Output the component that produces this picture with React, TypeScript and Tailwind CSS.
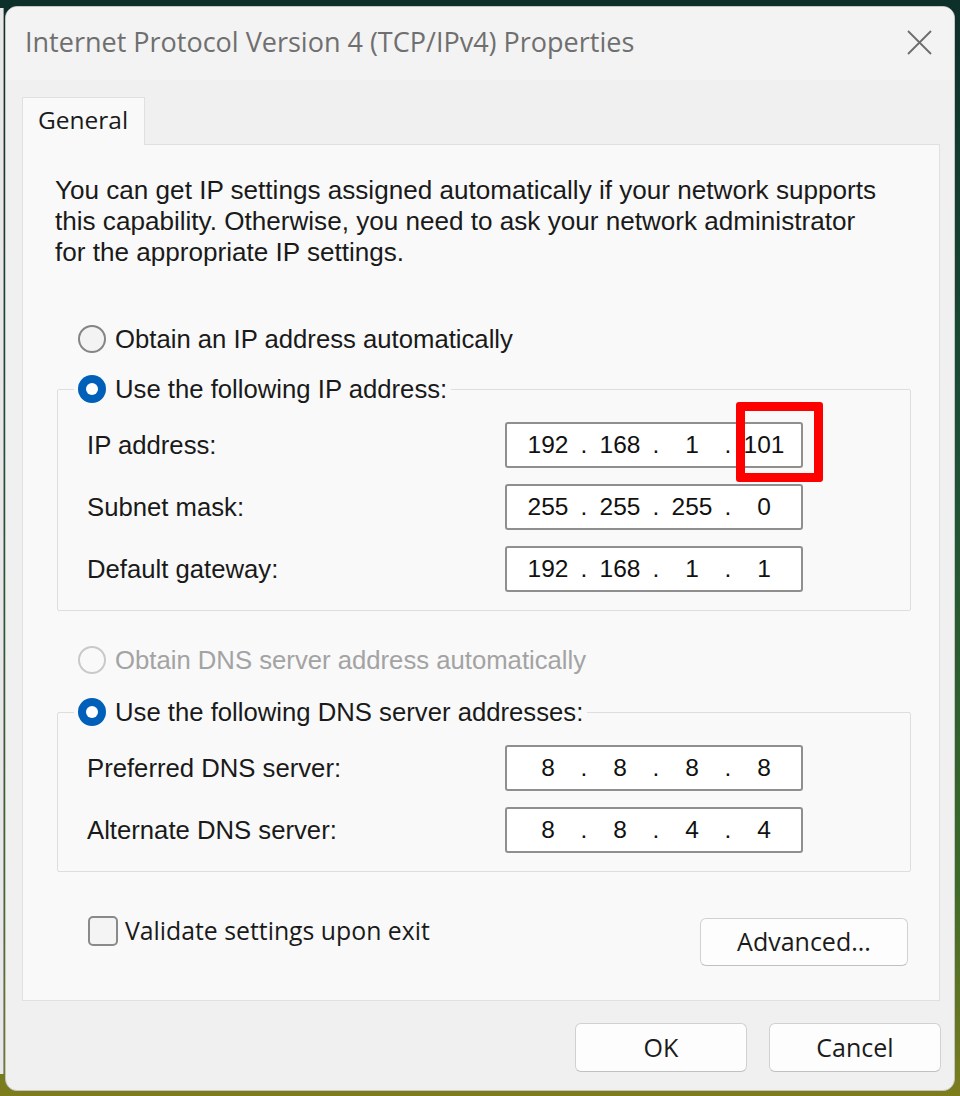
import React from 'react';

type RadioState = 'off' | 'on' | 'disabled';

const Radio: React.FC<{ state: RadioState }> = ({ state }) => {
  if (state === 'on') {
    return (
      <span className="flex h-[28px] w-[28px] shrink-0 items-center justify-center rounded-full bg-[#005fb8]">
        <span className="h-[12px] w-[12px] rounded-full bg-white" />
      </span>
    );
  }
  if (state === 'disabled') {
    return <span className="h-[28px] w-[28px] shrink-0 rounded-full border-2 border-[#c9c9c9]" />;
  }
  return <span className="h-[28px] w-[28px] shrink-0 rounded-full border-2 border-[#858585] bg-[#f3f3f3]" />;
};

const RadioRow: React.FC<{ state: RadioState; label: string }> = ({ state, label }) => (
  <div className="flex h-[30px] items-center gap-[9px]">
    <Radio state={state} />
    <span
      className={`whitespace-nowrap font-['Liberation_Sans',Arial,sans-serif] text-[25.7px] leading-[30px] ${
        state === 'disabled' ? 'text-[#a3a3a3]' : 'text-[#1a1a1a]'
      }`}
    >
      {label}
    </span>
  </div>
);

const IpField: React.FC<{ octets: string[]; highlight?: boolean }> = ({ octets, highlight }) => (
  <div className="relative flex h-[46px] w-[298px] items-center rounded-[3px] border-2 border-[#8f8f8f] bg-white pl-[12px] font-['Liberation_Sans',Arial,sans-serif] text-[24.5px] text-[#111111]">
    {octets.map((o, i) => (
      <React.Fragment key={i}>
        {i > 0 && <span className="w-[14px] text-center">.</span>}
        <span className="w-[58px] text-center">{o}</span>
      </React.Fragment>
    ))}
    {highlight && (
      <span className="pointer-events-none absolute left-[229px] top-[-22px] h-[80px] w-[87px] rounded-[3px] border-[9px] border-[#ff0000]" />
    )}
  </div>
);

interface Row {
  label: string;
  octets: string[];
  highlight?: boolean;
}

const Group: React.FC<{ legend: string; rows: Row[] }> = ({ legend, rows }) => (
  <fieldset className="ml-[2px] rounded-[2px] border border-[#dedede] pb-[18px] pl-[16px]">
    <legend className="px-[4px]">
      <RadioRow state="on" label={legend} />
    </legend>
    <div className="ml-[13px] mt-[18px] flex flex-col gap-[16px]">
      {rows.map((r) => (
        <div key={r.label} className="grid grid-cols-[418px_298px] items-center">
          <span className="whitespace-nowrap font-['Liberation_Sans',Arial,sans-serif] text-[25.7px] leading-[30px] text-[#1a1a1a]">
            {r.label}
          </span>
          <IpField octets={r.octets} highlight={r.highlight} />
        </div>
      ))}
    </div>
  </fieldset>
);

const Button: React.FC<{ label: string; className?: string }> = ({ label, className = '' }) => (
  <button
    className={`flex items-center justify-center rounded-[6px] border border-[#d1d1d1] border-b-[#c0c0c0] bg-[#fdfdfd] font-['Open_Sans',sans-serif] text-[25px] text-[#1b1b1b] ${className}`}
  >
    {label}
  </button>
);

export default function App() {
  return (
    <div className="flex h-[1096px] w-[960px] overflow-hidden bg-[linear-gradient(180deg,#0d2f2a_0%,#1c4f36_40%,#3b6a28_80%,#7d7d1e_100%)]">
      <div className="w-[5px] pt-[8px]">
        <div className="h-[1066px] w-[4px] border-r border-[#9c9c9c] bg-[#e8e8e8]" />
      </div>
      <div className="pt-[6px]">
        <div className="flex h-[1085px] w-[950px] flex-col overflow-hidden rounded-[12px] border border-[#c4c4c4] bg-[#f0f0f0]">
          {/* title bar */}
          <div className="flex h-[73px] items-center justify-between bg-[#f3f3f3] pb-[2px] pl-[19px] pr-[22px]">
            <span className="whitespace-nowrap font-['Open_Sans',sans-serif] text-[27px] text-[#6f6f6f]">
              Internet Protocol Version 4 (TCP/IPv4) Properties
            </span>
            <svg width="25" height="25" viewBox="0 0 25 25" fill="none" stroke="#6c6c6c" strokeWidth="1.8">
              <path d="M1 1 L24 24 M24 1 L1 24" />
            </svg>
          </div>

          <div className="flex flex-col pl-[16px] pr-[14px]">
            {/* tab */}
            <div className="relative z-10 -mb-px mt-[17px] flex h-[48px] w-[123px] items-center border border-b-0 border-[#e0e0e0] bg-[#f9f9f9] pb-[2px] pl-[15px] font-['Open_Sans',sans-serif] text-[24.5px] text-[#1a1a1a]">
              General
            </div>

            {/* panel */}
            <div className="w-[918px] border border-[#e0e0e0] bg-[#f9f9f9] pb-[34px] pl-[32px] pr-[28px] pt-[30px]">
              <p className="whitespace-nowrap font-['Liberation_Sans',Arial,sans-serif] text-[26.1px] leading-[31px] text-[#1a1a1a]">
                You can get IP settings assigned automatically if your network supports
                <br />
                this capability. Otherwise, you need to ask your network administrator
                <br />
                for the appropriate IP settings.
              </p>

              <div className="ml-[23px] mt-[56px]">
                <RadioRow state="off" label="Obtain an IP address automatically" />
              </div>

              <div className="mt-[20px]">
                <Group
                  legend="Use the following IP address:"
                  rows={[
                    { label: 'IP address:', octets: ['192', '168', '1', '101'], highlight: true },
                    { label: 'Subnet mask:', octets: ['255', '255', '255', '0'] },
                    { label: 'Default gateway:', octets: ['192', '168', '1', '1'] },
                  ]}
                />
              </div>

              <div className="ml-[23px] mt-[34px]">
                <RadioRow state="disabled" label="Obtain DNS server address automatically" />
              </div>

              <div className="mt-[22px]">
                <Group
                  legend="Use the following DNS server addresses:"
                  rows={[
                    { label: 'Preferred DNS server:', octets: ['8', '8', '8', '8'] },
                    { label: 'Alternate DNS server:', octets: ['8', '8', '4', '4'] },
                  ]}
                />
              </div>

              <div className="mt-[44px] flex items-start justify-between">
                <div className="ml-[33px] flex h-[30px] items-center gap-[7px]">
                  <span className="h-[30px] w-[30px] rounded-[5px] border-2 border-[#8a8a8a] bg-[#f4f4f4]" />
                  <span className="whitespace-nowrap font-['Open_Sans',sans-serif] text-[24.8px] text-[#1a1a1a]">
                    Validate settings upon exit
                  </span>
                </div>
                <Button label="Advanced..." className="mr-[3px] mt-[2px] h-[48px] w-[208px]" />
              </div>
            </div>

            {/* dialog buttons */}
            <div className="-mr-px mt-[22px] flex justify-end gap-[22px]">
              <Button label="OK" className="h-[49px] w-[172px]" />
              <Button label="Cancel" className="h-[49px] w-[172px]" />
            </div>
          </div>
        </div>
      </div>
    </div>
  );
}
